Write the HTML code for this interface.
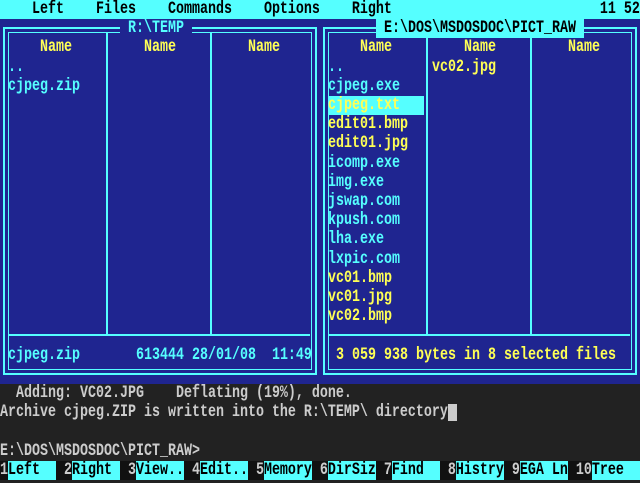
<!DOCTYPE html>
<html><head><style>
body{margin:0;width:640px;height:480px;overflow:hidden;background:#222;position:relative;font-family:"Liberation Mono",monospace}
.t{position:absolute;font-size:13.33px;font-weight:bold;line-height:19.2px;height:19.2px;white-space:pre;transform:scaleY(1.35);transform-origin:0 50%}
.c{color:#5ff}.y{color:#ff5}.k{color:#000}.w{color:#ccc}
.bl{position:absolute;background:#5ff}
</style></head><body>
<div style="position:absolute;left:0;top:0;width:640px;height:19.2px;background:#5ff"></div>
<div style="position:absolute;left:0;top:19.2px;width:640px;height:364.8px;background:#1f2590"></div>
<div style="position:absolute;left:3px;top:27px;width:310px;height:344px;border:2px solid #5ff"></div>
<div style="position:absolute;left:8px;top:32px;width:302px;height:336px;border:1px solid #5ff"></div>
<div class="bl" style="left:106px;top:32px;width:2px;height:302px"></div>
<div class="bl" style="left:210px;top:32px;width:2px;height:302px"></div>
<div class="bl" style="left:8px;top:334px;width:302px;height:2px"></div>
<div style="position:absolute;left:323px;top:27px;width:310px;height:344px;border:2px solid #5ff"></div>
<div style="position:absolute;left:328px;top:32px;width:302px;height:336px;border:1px solid #5ff"></div>
<div class="bl" style="left:426px;top:32px;width:2px;height:302px"></div>
<div class="bl" style="left:530px;top:32px;width:2px;height:302px"></div>
<div class="bl" style="left:328px;top:334px;width:302px;height:2px"></div>
<div style="position:absolute;left:120px;top:19.2px;width:72px;height:19.2px;background:#1f2590"></div>
<div style="position:absolute;left:376px;top:19.2px;width:208px;height:19.2px;background:#5ff"></div>
<div style="position:absolute;left:328px;top:96px;width:96px;height:19.2px;background:#5ff"></div>

<div class="t k" style="left:0;top:0">    Left    Files    Commands    Options    Right                          11 52</div>
<div class="t c" style="left:128px;top:19.2px">R:\TEMP</div>
<div class="t k" style="left:384px;top:19.2px">E:\DOS\MSDOSDOC\PICT_RAW</div>
<div class="t y" style="left:40px;top:38.4px">Name</div>
<div class="t y" style="left:144px;top:38.4px">Name</div>
<div class="t y" style="left:248px;top:38.4px">Name</div>
<div class="t y" style="left:360px;top:38.4px">Name</div>
<div class="t y" style="left:464px;top:38.4px">Name</div>
<div class="t y" style="left:568px;top:38.4px">Name</div>
<div class="t c" style="left:8px;top:57.6px">..</div>
<div class="t c" style="left:8px;top:76.8px">cjpeg.zip</div>
<div class="t c" style="left:328px;top:57.6px">..</div>
<div class="t c" style="left:328px;top:76.8px">cjpeg.exe</div>
<div class="t y" style="left:328px;top:96px">cjpeg.txt</div>
<div class="t y" style="left:328px;top:115.2px">edit01.bmp</div>
<div class="t y" style="left:328px;top:134.4px">edit01.jpg</div>
<div class="t c" style="left:328px;top:153.6px">icomp.exe</div>
<div class="t c" style="left:328px;top:172.8px">img.exe</div>
<div class="t c" style="left:328px;top:192px">jswap.com</div>
<div class="t c" style="left:328px;top:211.2px">kpush.com</div>
<div class="t c" style="left:328px;top:230.4px">lha.exe</div>
<div class="t c" style="left:328px;top:249.6px">lxpic.com</div>
<div class="t y" style="left:328px;top:268.8px">vc01.bmp</div>
<div class="t y" style="left:328px;top:288px">vc01.jpg</div>
<div class="t y" style="left:328px;top:307.2px">vc02.bmp</div>
<div class="t y" style="left:432px;top:57.6px">vc02.jpg</div>
<div class="t c" style="left:8px;top:345.6px">cjpeg.zip       613444 28/01/08  11:49</div>
<div class="t y" style="left:336px;top:345.6px">3 059 938 bytes in 8 selected files</div>

<div class="t w" style="left:0;top:384px">  Adding: VC02.JPG    Deflating (19%), done.</div>
<div class="t w" style="left:0;top:403.2px">Archive cjpeg.ZIP is written into the R:\TEMP\ directory</div>
<div style="position:absolute;left:448px;top:404px;width:9px;height:17px;background:#ccc"></div>
<div class="t w" style="left:0;top:441.6px">E:\DOS\MSDOSDOC\PICT_RAW&gt;</div>
<div style="position:absolute;left:0;top:460.8px;width:640px;height:19.2px;background:#111"></div>
<div class="bl" style="left:8px;top:460.8px;width:48px;height:19.2px"></div>
<div class="bl" style="left:72px;top:460.8px;width:48px;height:19.2px"></div>
<div class="bl" style="left:136px;top:460.8px;width:48px;height:19.2px"></div>
<div class="bl" style="left:200px;top:460.8px;width:48px;height:19.2px"></div>
<div class="bl" style="left:264px;top:460.8px;width:48px;height:19.2px"></div>
<div class="bl" style="left:328px;top:460.8px;width:48px;height:19.2px"></div>
<div class="bl" style="left:392px;top:460.8px;width:48px;height:19.2px"></div>
<div class="bl" style="left:456px;top:460.8px;width:48px;height:19.2px"></div>
<div class="bl" style="left:520px;top:460.8px;width:48px;height:19.2px"></div>
<div class="bl" style="left:592px;top:460.8px;width:48px;height:19.2px"></div>
<div class="t w" style="left:0;top:460.8px">1       2       3       4       5       6       7       8       9       10</div>
<div class="t k" style="left:0;top:460.8px"> Left    Right   View..  Edit..  Memory  DirSiz  Find    Histry  EGA Ln   Tree</div>
</body></html>
